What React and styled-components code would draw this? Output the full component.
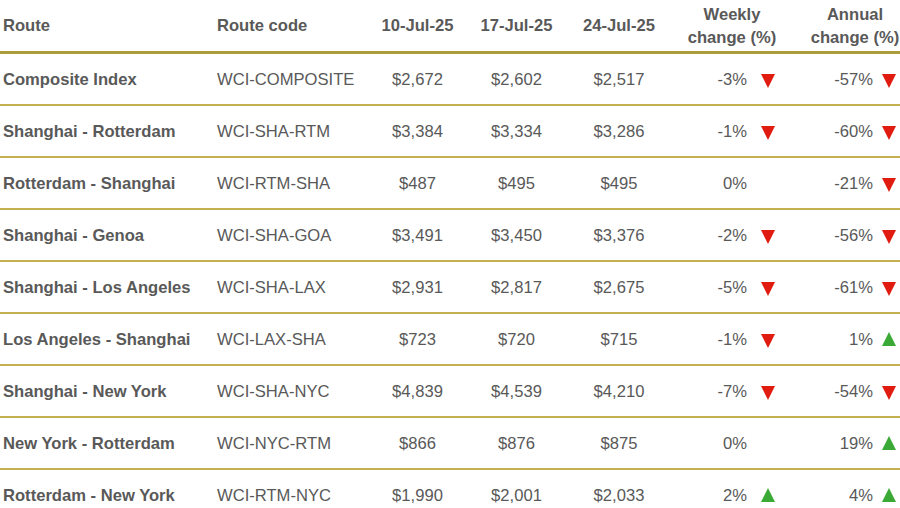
import React from 'react';
import styled, { createGlobalStyle } from 'styled-components';

const GlobalStyle = createGlobalStyle`
    body {
        margin: 0;
        background: #ffffff;
        font-family: "Liberation Sans", Arial, sans-serif;
        color: #595959;
    }
`;

const COLUMNS = '210px 160px 95px 103px 102px 120px 110px';

const Table = styled.div`
    width: 900px;
    overflow: hidden;
`;

const HeaderRow = styled.div`
    display: grid;
    grid-template-columns: ${COLUMNS};
    height: 51px;
    border-bottom: 3px solid #ab9c3c;
    align-items: center;
    font-size: 16.6px;
    font-weight: bold;
    line-height: 23px;
`;

const HeadCell = styled.div`
    text-align: ${(p) => p.align || 'center'};
    padding-left: ${(p) => p.indent || 0}px;
    white-space: nowrap;
`;

const Row = styled.div`
    display: grid;
    grid-template-columns: ${COLUMNS};
    height: 52px;
    padding-top: 1px;
    box-sizing: border-box;
    border-bottom: 2px solid ${(p) => (p.last ? 'transparent' : '#c6af4e')};
    align-items: center;
    font-size: 16.6px;
`;

const RouteName = styled.div`
    font-weight: bold;
    padding-left: 3px;
    white-space: nowrap;
`;

const Code = styled.div`
    padding-left: 7px;
    white-space: nowrap;
`;

const Price = styled.div`
    text-align: center;
`;

const Change = styled.div`
    display: grid;
    grid-template-columns: ${(p) => p.valueWidth}px 14px;
    column-gap: ${(p) => p.gap}px;
    align-items: center;
`;

const ChangeValue = styled.span`
    text-align: right;
`;

const Triangle = styled.span`
    width: 0;
    height: 0;
    border-left: 7px solid transparent;
    border-right: 7px solid transparent;
    ${(p) =>
        p.up
            ? 'border-bottom: 14px solid #3aa935; margin-top: -2px;'
            : 'border-top: 14px solid #e01b0f; margin-top: 2px;'}
`;

const rows = [
    ['Composite Index', 'WCI-COMPOSITE', '$2,672', '$2,602', '$2,517', -3, -57],
    ['Shanghai - Rotterdam', 'WCI-SHA-RTM', '$3,384', '$3,334', '$3,286', -1, -60],
    ['Rotterdam - Shanghai', 'WCI-RTM-SHA', '$487', '$495', '$495', 0, -21],
    ['Shanghai - Genoa', 'WCI-SHA-GOA', '$3,491', '$3,450', '$3,376', -2, -56],
    ['Shanghai - Los Angeles', 'WCI-SHA-LAX', '$2,931', '$2,817', '$2,675', -5, -61],
    ['Los Angeles - Shanghai', 'WCI-LAX-SHA', '$723', '$720', '$715', -1, 1],
    ['Shanghai - New York', 'WCI-SHA-NYC', '$4,839', '$4,539', '$4,210', -7, -54],
    ['New York - Rotterdam', 'WCI-NYC-RTM', '$866', '$876', '$875', 0, 19],
    ['Rotterdam - New York', 'WCI-RTM-NYC', '$1,990', '$2,001', '$2,033', 2, 4],
];

function ChangeCell({ value, valueWidth, gap }) {
    return (
        <Change valueWidth={valueWidth} gap={gap}>
            <ChangeValue>{value}%</ChangeValue>
            {value !== 0 ? <Triangle up={value > 0} /> : <span />}
        </Change>
    );
}

export default function App() {
    return (
        <Table>
            <GlobalStyle />
            <HeaderRow>
                <HeadCell align="left" indent={3}>Route</HeadCell>
                <HeadCell align="left" indent={7}>Route code</HeadCell>
                <HeadCell>10-Jul-25</HeadCell>
                <HeadCell>17-Jul-25</HeadCell>
                <HeadCell>24-Jul-25</HeadCell>
                <HeadCell indent={4}>Weekly<br />change (%)</HeadCell>
                <HeadCell indent={20}>Annual<br />change (%)</HeadCell>
            </HeaderRow>
            {rows.map(([route, code, a, b, c, weekly, annual], i) => (
                <Row key={code} last={i === rows.length - 1}>
                    <RouteName>{route}</RouteName>
                    <Code>{code}</Code>
                    <Price>{a}</Price>
                    <Price>{b}</Price>
                    <Price>{c}</Price>
                    <ChangeCell value={weekly} valueWidth={77} gap={14} />
                    <ChangeCell value={annual} valueWidth={83} gap={9} />
                </Row>
            ))}
        </Table>
    );
}
